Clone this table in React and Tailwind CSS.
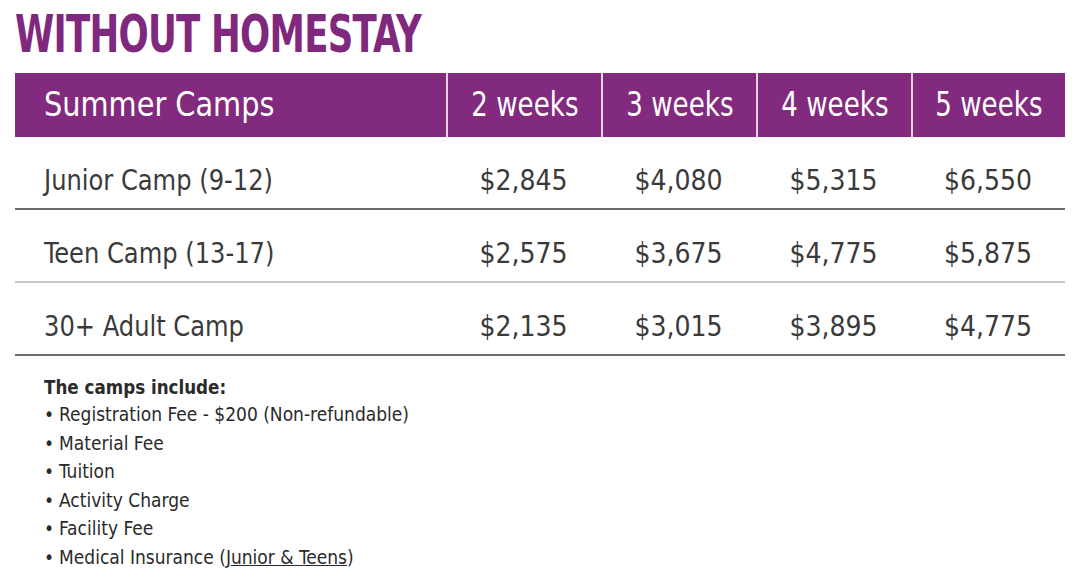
import React from 'react'

const rows = [
  { name: 'Junior Camp (9-12)', prices: ['$2,845', '$4,080', '$5,315', '$6,550'], line: 'border-[#6b6b6b]' },
  { name: 'Teen Camp (13-17)', prices: ['$2,575', '$3,675', '$4,775', '$5,875'], line: 'border-[#c8c8c8]' },
  { name: '30+ Adult Camp', prices: ['$2,135', '$3,015', '$3,895', '$4,775'], line: 'border-[#6b6b6b]' },
]

const includes = [
  'Registration Fee - $200 (Non-refundable)',
  'Material Fee',
  'Tuition',
  'Activity Charge',
  'Facility Fee',
]

export default function App() {
  return (
    <div className="w-[1080px] h-[577px] bg-white overflow-hidden font-['Liberation_Sans_Narrow','DejaVu_Sans_Condensed',sans-serif] px-[15px] pt-[4px]">
      <h1 className="text-[52px] leading-[60px] font-bold text-[#80287d] tracking-[-1px]">
        <span className="inline-block origin-left scale-x-[0.76] whitespace-nowrap">WITHOUT HOMESTAY</span>
      </h1>

      <div className="mt-[9px] w-[1050px]">
        {/* header */}
        <div className="grid grid-cols-[431px_155px_155px_155px_154px] h-[64px] bg-[#822a7e] text-white text-[33px]">
          <div className="flex items-center pl-[29px]">
            <span className="inline-block origin-left scale-x-[0.97] whitespace-nowrap">Summer Camps</span>
          </div>
          {['2 weeks', '3 weeks', '4 weeks', '5 weeks'].map(w => (
            <div key={w} className="flex items-center justify-center border-l-2 border-[#e7cfe4]">
              <span className="inline-block scale-x-[0.88] whitespace-nowrap">{w}</span>
            </div>
          ))}
        </div>

        {/* rows */}
        {rows.map(r => (
          <div key={r.name} className={`grid grid-cols-[431px_155px_155px_155px_154px] h-[73px] border-b-2 ${r.line} text-[#3a3a3a] text-[28px]`}>
            <div className="flex items-center pl-[29px] pt-[16px]">
              <span className="inline-block origin-left scale-x-[0.96] whitespace-nowrap">{r.name}</span>
            </div>
            {r.prices.map((p, i) => (
              <div key={i} className="flex items-center justify-center pt-[16px]">{p}</div>
            ))}
          </div>
        ))}
      </div>

      <div className="pl-[29px] pt-[18px] text-[#2a2a2a]">
        <p className="text-[20px] leading-[26px] font-bold">
          <span className="inline-block origin-left scale-x-[0.93] whitespace-nowrap">The camps include:</span>
        </p>
        <ul className="text-[19px] leading-[28.5px]">
          {includes.map(item => (
            <li key={item} className="flex"><span className="w-[15px]">•</span>{item}</li>
          ))}
          <li className="flex"><span className="w-[15px]">•</span>Medical Insurance (<span className="underline">Junior &amp; Teens</span>)</li>
        </ul>
      </div>
    </div>
  )
}
